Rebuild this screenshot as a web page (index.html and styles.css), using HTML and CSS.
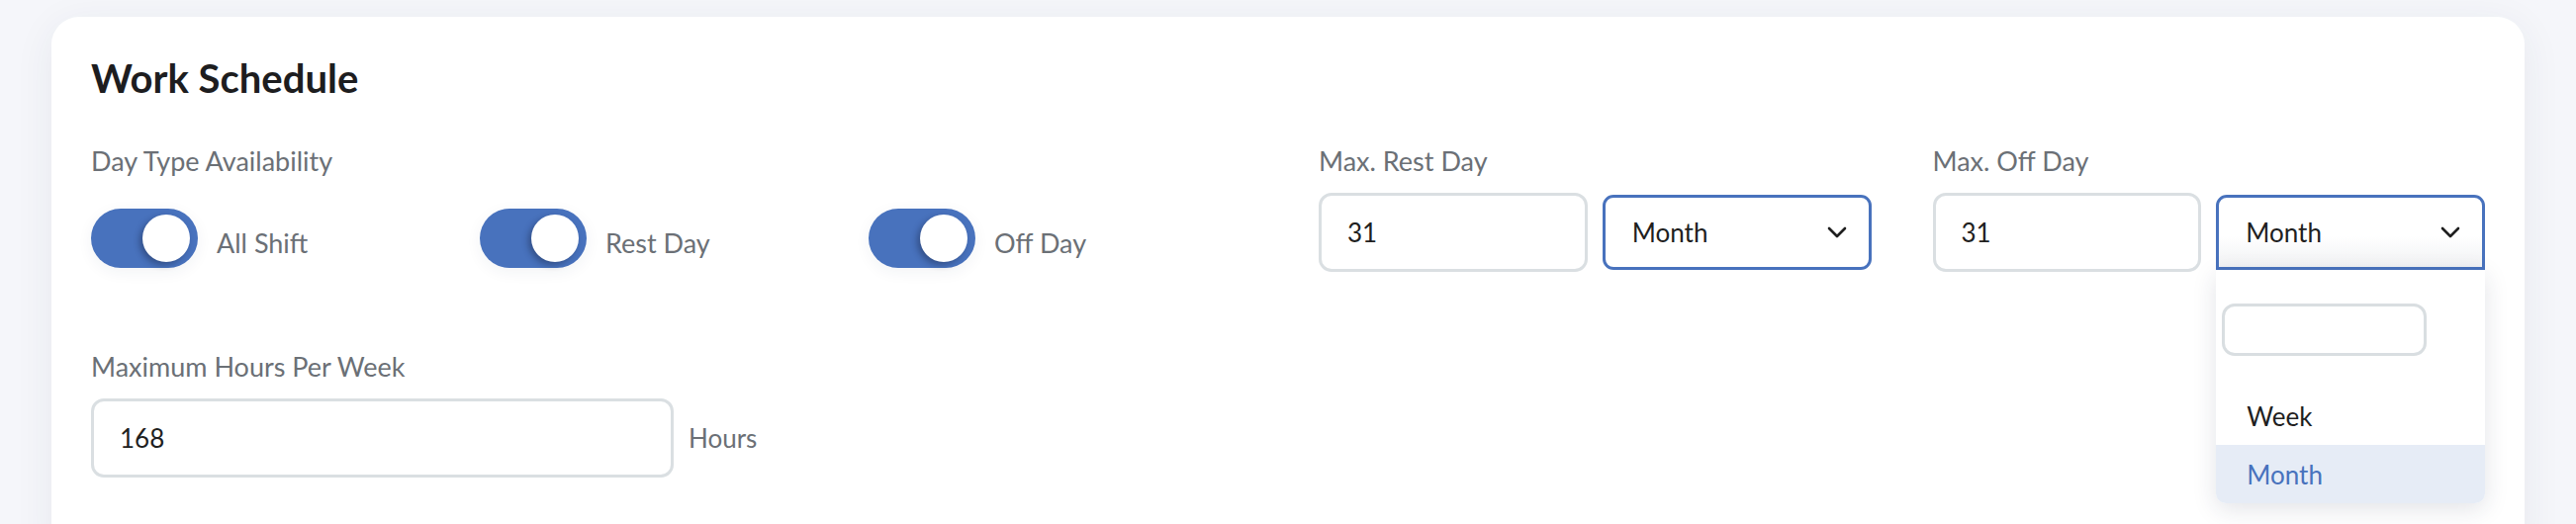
FILE: index.html
```html
<!DOCTYPE html>
<html lang="en">
<head>
<meta charset="utf-8">
<title>Work Schedule</title>
<link rel="stylesheet" href="styles.css">
</head>
<body>
<div class="page">
  <section class="card">
    <h1 class="title">Work Schedule</h1>
    <div class="row-top">
      <div class="group group-wide">
        <div class="label">Day Type Availability</div>
        <div class="toggles">
          <div class="toggle-item"><span class="toggle"><span class="knob"></span></span><span class="toggle-text">All Shift</span></div>
          <div class="toggle-item"><span class="toggle"><span class="knob"></span></span><span class="toggle-text">Rest Day</span></div>
          <div class="toggle-item"><span class="toggle"><span class="knob"></span></span><span class="toggle-text">Off Day</span></div>
        </div>
      </div>
      <div class="group">
        <div class="label">Max. Rest Day</div>
        <div class="fields">
          <div class="input">31</div>
          <div class="select-wrap">
            <div class="select">
              <span>Month</span>
              <svg class="chev" width="20" height="12" viewBox="0 0 20 12"><path d="M2 2 L10 10 L18 2" fill="none" stroke="#1f1f1f" stroke-width="2.6" stroke-linecap="round" stroke-linejoin="round"/></svg>
            </div>
          </div>
        </div>
      </div>
      <div class="group">
        <div class="label">Max. Off Day</div>
        <div class="fields">
          <div class="input">31</div>
          <div class="select-wrap">
            <div class="select select-open">
              <span>Month</span>
              <svg class="chev" width="20" height="12" viewBox="0 0 20 12"><path d="M2 2 L10 10 L18 2" fill="none" stroke="#1f1f1f" stroke-width="2.6" stroke-linecap="round" stroke-linejoin="round"/></svg>
            </div>
            <div class="dropdown">
              <div class="search-box"><div class="search"></div></div>
              <div class="option">Week</div>
              <div class="option option-active">Month</div>
            </div>
          </div>
        </div>
      </div>
    </div>
    <div class="row-bottom">
      <div class="label">Maximum Hours Per Week</div>
      <div class="hours-row">
        <div class="input input-hours">168</div>
        <span class="unit">Hours</span>
      </div>
    </div>
  </section>
</div>
</body>
</html>
```
FILE: styles.css
```css
* { box-sizing: border-box; }
html, body { margin: 0; padding: 0; }
body {
  background: #f5f6fa;
  font-family: Lato, "Noto Sans", sans-serif;
  width: 2604px;
  height: 530px;
  overflow: hidden;
}
.page {
  padding: 17px 52px 0 52px;
  height: 530px;
  overflow: hidden;
}
.card {
  background: #ffffff;
  border-radius: 28px 28px 0 0;
  box-shadow: 0 8px 40px rgba(40, 50, 90, 0.07);
  padding: 38px 40px 0 40px;
  height: 540px;
}
.title {
  margin: 0;
  font-size: 40px;
  line-height: 48px;
  font-weight: 700;
  color: #1d1d1f;
}
.row-top {
  display: grid;
  grid-template-columns: repeat(4, 1fr);
  column-gap: 62px;
  margin-top: 44px;
}
.group-wide { grid-column: span 2; }
.label {
  font-size: 27px;
  line-height: 32px;
  color: #6b7076;
}
.toggles {
  display: grid;
  grid-template-columns: repeat(3, 1fr);
  margin-top: 32px;
}
.toggle-item {
  display: flex;
  align-items: center;
  gap: 19px;
}
.toggle {
  width: 108px;
  height: 60px;
  border-radius: 30px;
  background: #4872bd;
  display: flex;
  align-items: center;
  justify-content: flex-end;
  padding: 0 8px;
  box-shadow: 0 4px 16px rgba(40, 50, 90, 0.06);
}
.knob {
  width: 48px;
  height: 48px;
  border-radius: 50%;
  background: #ffffff;
  box-shadow: -3px 3px 6px rgba(20, 30, 60, 0.4);
}
.toggle-text {
  font-size: 27px;
  color: #6b7076;
  padding-top: 8px;
}
.fields {
  display: grid;
  grid-template-columns: 1fr 1fr;
  align-items: center;
  column-gap: 15px;
  margin-top: 16px;
  height: 80px;
}
.input {
  height: 80px;
  border: 3px solid #dadfe2;
  border-radius: 13px;
  padding: 0 26px;
  display: flex;
  align-items: center;
  font-size: 26px;
  color: #1f1f1f;
  background: #fff;
}
.select-wrap { position: relative; }
.select {
  height: 76px;
  border: 3px solid #4872bd;
  border-radius: 11px;
  padding: 0 22px 0 27px;
  display: flex;
  align-items: center;
  justify-content: space-between;
  font-size: 26px;
  color: #1f1f1f;
  background: #fff;
}
.select-open {
  border-radius: 11px 11px 0 0;
  background: linear-gradient(#ffffff 55%, #f1f2f4 100%);
}
.chev { display: block; }
.dropdown {
  position: absolute;
  left: 0;
  right: 0;
  top: 76px;
  height: 236px;
  background: #ffffff;
  border-radius: 0 0 10px 10px;
  box-shadow: 0 6px 24px rgba(30, 40, 70, 0.13);
  overflow: hidden;
  z-index: 5;
}
.search-box {
  padding: 34px 0 31px 6px;
}
.search {
  width: 207px;
  height: 53px;
  border: 3px solid #d9dee1;
  border-radius: 13px;
}
.option {
  height: 59px;
  display: flex;
  align-items: center;
  padding-left: 31px;
  font-size: 26px;
  color: #1f1f1f;
}
.option-active {
  background: #e6ecf6;
  color: #4872bd;
}
.row-bottom {
  margin-top: 80px;
}
.hours-row {
  display: flex;
  align-items: center;
  gap: 15px;
  margin-top: 16px;
}
.input-hours {
  width: 589px;
}
.unit {
  font-size: 26px;
  color: #6b7076;
}
```
